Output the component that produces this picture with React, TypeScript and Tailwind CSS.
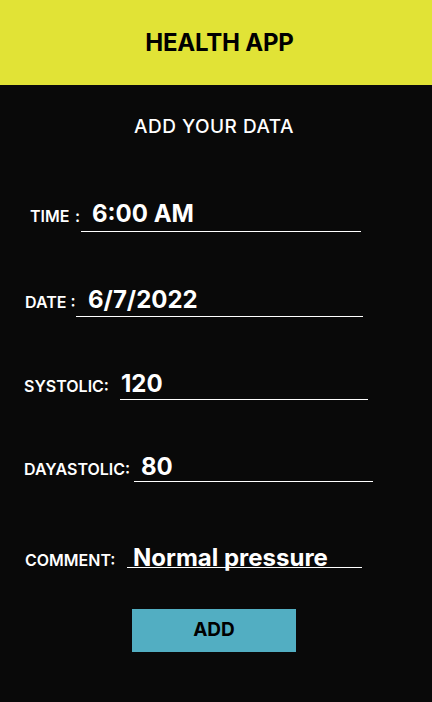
import React from "react";

interface FieldRowProps {
  label: React.ReactNode;
  value: string;
  rowClass: string;
  labelClass: string;
  lineClass: string;
  valueClass?: string;
}

function FieldRow({ label, value, rowClass, labelClass, lineClass, valueClass }: FieldRowProps) {
  return (
    <div className={`flex items-baseline ${rowClass}`}>
      <div className={`shrink-0 text-[16px] font-semibold leading-5 text-white ${labelClass}`}>{label}</div>
      <div className={`shrink-0 border-b border-white ${lineClass}`}>
        <span className={`block text-[24px] font-bold text-white ${valueClass ?? "leading-[28px]"}`}>{value}</span>
      </div>
    </div>
  );
}

export default function App() {
  return (
    <div className="w-[432px] h-[702px] bg-[#090909] font-['Inter','Liberation_Sans',sans-serif] flex flex-col">
      {/* header */}
      <div className="h-[85px] bg-[#e1e336] flex items-center justify-center pl-[7px]">
        <h1 className="text-[24px] font-bold text-black tracking-[-0.2px]">HEALTH APP</h1>
      </div>

      <h2 className="mt-[30px] text-center text-[19px] leading-6 font-medium tracking-[0.5px] text-white pr-[4px]">
        ADD YOUR DATA
      </h2>

      <FieldRow
        rowClass="mt-[61px] pl-[30px]"
        labelClass="w-[51px] flex justify-between pr-[1px]"
        label={<><span>TIME</span><span>:</span></>}
        lineClass="w-[280px] pl-[11px] pb-[3px]"
        value="6:00 AM"
      />
      <FieldRow
        rowClass="mt-[54px] pl-[25px]"
        labelClass="w-[51px]"
        label="DATE :"
        lineClass="w-[287px] pl-[12px] pb-[2px]"
        value="6/7/2022"
      />
      <FieldRow
        rowClass="mt-[53px] pl-[24px]"
        labelClass="w-[96px]"
        label="SYSTOLIC:"
        lineClass="w-[248px] pl-[1px] pb-[1px]"
        value="120"
      />
      <FieldRow
        rowClass="mt-[53px] pl-[24px]"
        labelClass="w-[110px]"
        label="DAYASTOLIC:"
        lineClass="w-[239px] pl-[7px]"
        value="80"
      />
      <FieldRow
        rowClass="mt-[67px] pl-[25px]"
        labelClass="w-[102px]"
        label="COMMENT:"
        lineClass="w-[235px] pl-[6px]"
        valueClass="leading-[18px] text-[23px]"
        value="Normal pressure"
      />

      <button className="mt-[39px] ml-[132px] w-[164px] h-[43px] bg-[#52aec2] text-black text-[19px] font-bold">
        ADD
      </button>
    </div>
  );
}
